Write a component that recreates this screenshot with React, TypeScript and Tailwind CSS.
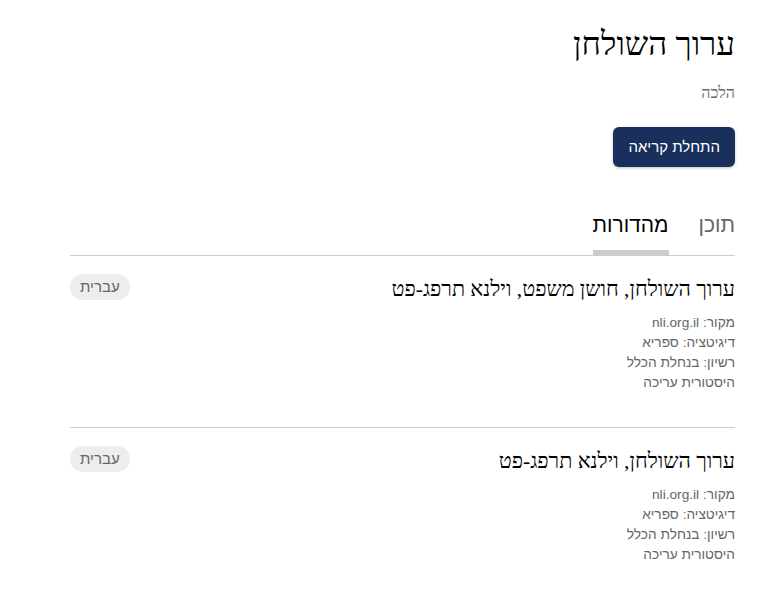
import React from 'react';

interface Version {
  title: string;
  source: string;
  digitizer: string;
  license: string;
}

const versions: Version[] = [
  {
    title: 'ערוך השולחן, חושן משפט, וילנא תרפג-פט',
    source: 'nli.org.il',
    digitizer: 'ספריא',
    license: 'בנחלת הכלל',
  },
  {
    title: 'ערוך השולחן, וילנא תרפג-פט',
    source: 'nli.org.il',
    digitizer: 'ספריא',
    license: 'בנחלת הכלל',
  },
];

const serif = "font-['Liberation_Serif',serif]";
const sans = "font-['Liberation_Sans','Noto_Sans',sans-serif]";

const VersionRow: React.FC<{ version: Version; last?: boolean }> = ({ version, last }) => (
  <div className={`flex items-start justify-between pt-[18px] pb-[34px] ${last ? '' : 'border-b border-[#ccc]'}`}>
    <div>
      <h3 className={`${serif} text-[21.5px] leading-[30px] text-black`}>{version.title}</h3>
      <div className={`${sans} mt-[9px] text-[13.7px] leading-[20px] text-[#666]`}>
        <div>
          מקור: <span>{version.source}</span>
        </div>
        <div>דיגיטציה: {version.digitizer}</div>
        <div>רשיון: {version.license}</div>
        <div>היסטורית עריכה</div>
      </div>
    </div>
    <span
      className={`${sans} flex h-[26px] items-center rounded-full bg-[#ededec] px-[10px] text-[15px] text-[#666]`}
    >
      עברית
    </span>
  </div>
);

export default function App() {
  return (
    <div dir="rtl" className="min-h-screen bg-white">
      <div className="mr-[34px] ml-[70px] pt-[24px]">
        <h1 className={`${serif} text-[33px] leading-[40px] text-black`}>ערוך השולחן</h1>
        <div className={`${serif} mt-[19px] text-[16px] leading-[20px] text-[#666]`}>הלכה</div>

        <button
          className={`${sans} mt-[24px] h-[40px] rounded-[6px] bg-[#18305b] px-[15px] text-[15px] text-white shadow-[0_1px_3px_rgba(0,0,0,0.25)]`}
        >
          התחלת קריאה
        </button>

        <div className="mt-[40px] flex border-b border-[#ccc]">
          <div className={`${sans} h-[48px] pt-[4px] text-[21px] leading-[28px] text-[#666]`}>תוכן</div>
          <div className={`${sans} mr-[30px] flex h-[48px] flex-col justify-between pt-[4px]`}>
            <span className="text-[21px] leading-[28px] text-black">מהדורות</span>
            <span className="h-[5px] bg-[#ccc]" />
          </div>
        </div>

        {versions.map((v, i) => (
          <VersionRow key={i} version={v} last={i === versions.length - 1} />
        ))}
      </div>
    </div>
  );
}
